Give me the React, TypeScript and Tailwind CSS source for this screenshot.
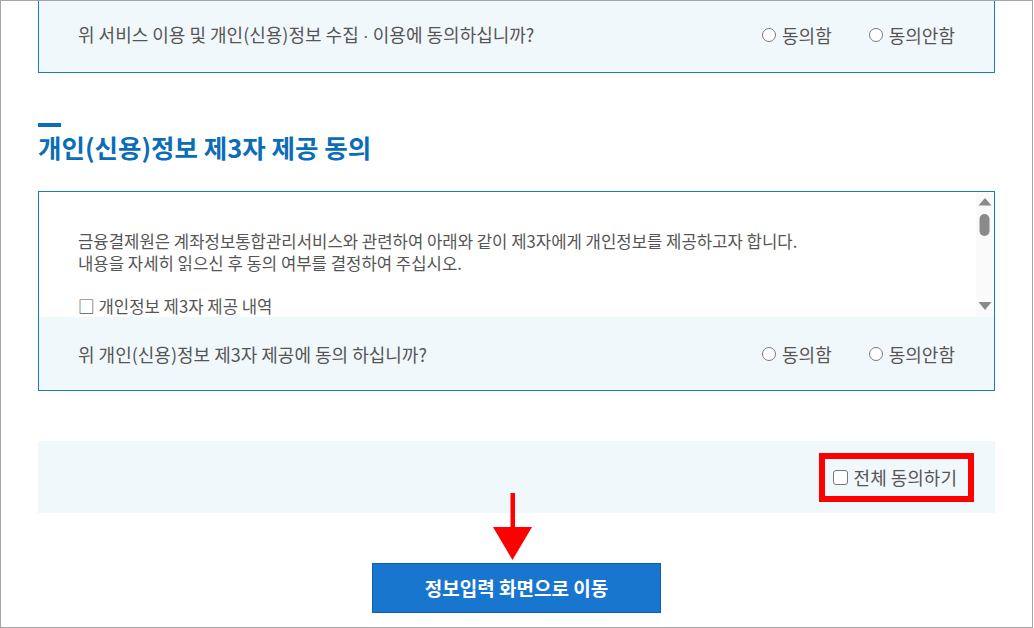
import React from "react";

const Radio = ({ label }: { label: string }) => (
  <span className="flex items-center">
    <span className="inline-block h-[14px] w-[14px] rounded-full border-[1.5px] border-[#7a7a7a] bg-white" />
    <span className="ml-[6px]">{label}</span>
  </span>
);

const Radios = () => (
  <div className="flex items-center gap-[37px]">
    <Radio label="동의함" />
    <Radio label="동의안함" />
  </div>
);

export default function App() {
  return (
    <div className="relative h-[628px] w-[1033px] overflow-hidden border border-[#a6a6a6] bg-white font-['Noto_Sans_CJK_KR','Noto_Sans',sans-serif] text-[#555555]">
      <div className="ml-[37px] w-[957px]">
        {/* first box (bottom part) */}
        <div className="flex h-[72px] items-center justify-between border-x border-b border-[#1a7ac7] bg-[#f1f8fc] pb-[3px] pl-[39px] pr-[39px] text-[18px] leading-[26px]">
          <span>
            위 서비스 이용 및 개인(신용)정보 수집 <span className="font-['Liberation_Sans',sans-serif]">·</span> 이용에 동의하십니까?
          </span>
          <Radios />
        </div>

        {/* heading */}
        <div className="mt-[50px] h-[4px] w-[23px] bg-[#0b6db7]" />
        <h2 className="mt-[3px] text-[25.5px] font-bold leading-[34px] text-[#0b6db7]">
          개인(신용)정보 제3자 제공 동의
        </h2>

        {/* second box */}
        <div className="mt-[27px] flex h-[200px] flex-col border border-[#1a7ac7]">
          <div className="flex h-[125px] bg-white">
            <div className="h-[125px] flex-1 overflow-hidden pl-[39px] pt-[38px] text-[16.7px] leading-[22px]">
              <p>금융결제원은 계좌정보통합관리서비스와 관련하여 아래와 같이 제3자에게 개인정보를 제공하고자 합니다.</p>
              <p>내용을 자세히 읽으신 후 동의 여부를 결정하여 주십시오.</p>
              <p>&nbsp;</p>
              <p className="leading-[20px]">□ 개인정보 제3자 제공 내역</p>
            </div>
            <div className="relative w-[18px] bg-[#fafafa]">
              <svg className="absolute left-0 top-0" width="18" height="125" viewBox="0 0 18 125">
                <polygon points="2.5,13.5 15.5,13.5 9,6" fill="#8a8a8a" />
                <rect x="3.5" y="22" width="10" height="22" rx="5" fill="#8a8a8a" />
                <polygon points="2.5,110 15.5,110 9,118" fill="#8a8a8a" />
              </svg>
            </div>
          </div>
          <div className="flex flex-1 items-center justify-between bg-[#f1f8fc] px-[39px] text-[18px] leading-[26px]">
            <span>위 개인(신용)정보 제3자 제공에 동의 하십니까?</span>
            <Radios />
          </div>
        </div>

        {/* all agree panel */}
        <div className="mt-[50px] flex h-[72px] items-center justify-end bg-[#f1f8fc] pr-[21px]">
          <div className="flex h-[49px] items-center border-[6px] border-[#ff0000] pl-[8px] pr-[11px] text-[18px] leading-[26px]">
            <span className="inline-block h-[15px] w-[15px] rounded-[3px] border-[1.5px] border-[#777777] bg-white" />
            <span className="ml-[6px]">전체 동의하기</span>
          </div>
        </div>

        {/* button */}
        <div className="mt-[50px] flex justify-center">
          <button className="h-[50px] w-[289px] border border-[#0f5fa8] bg-[#1976cf] text-[19px] font-bold text-white">
            정보입력 화면으로 이동
          </button>
        </div>
      </div>

      {/* red arrow annotation */}
      <svg className="absolute left-[492px] top-[492px]" width="40" height="68" viewBox="0 0 40 68">
        <rect x="17.5" y="0" width="4.5" height="36" fill="#ff0000" />
        <polygon points="0,34 39,34 19.5,67" fill="#ff0000" />
      </svg>
    </div>
  );
}
